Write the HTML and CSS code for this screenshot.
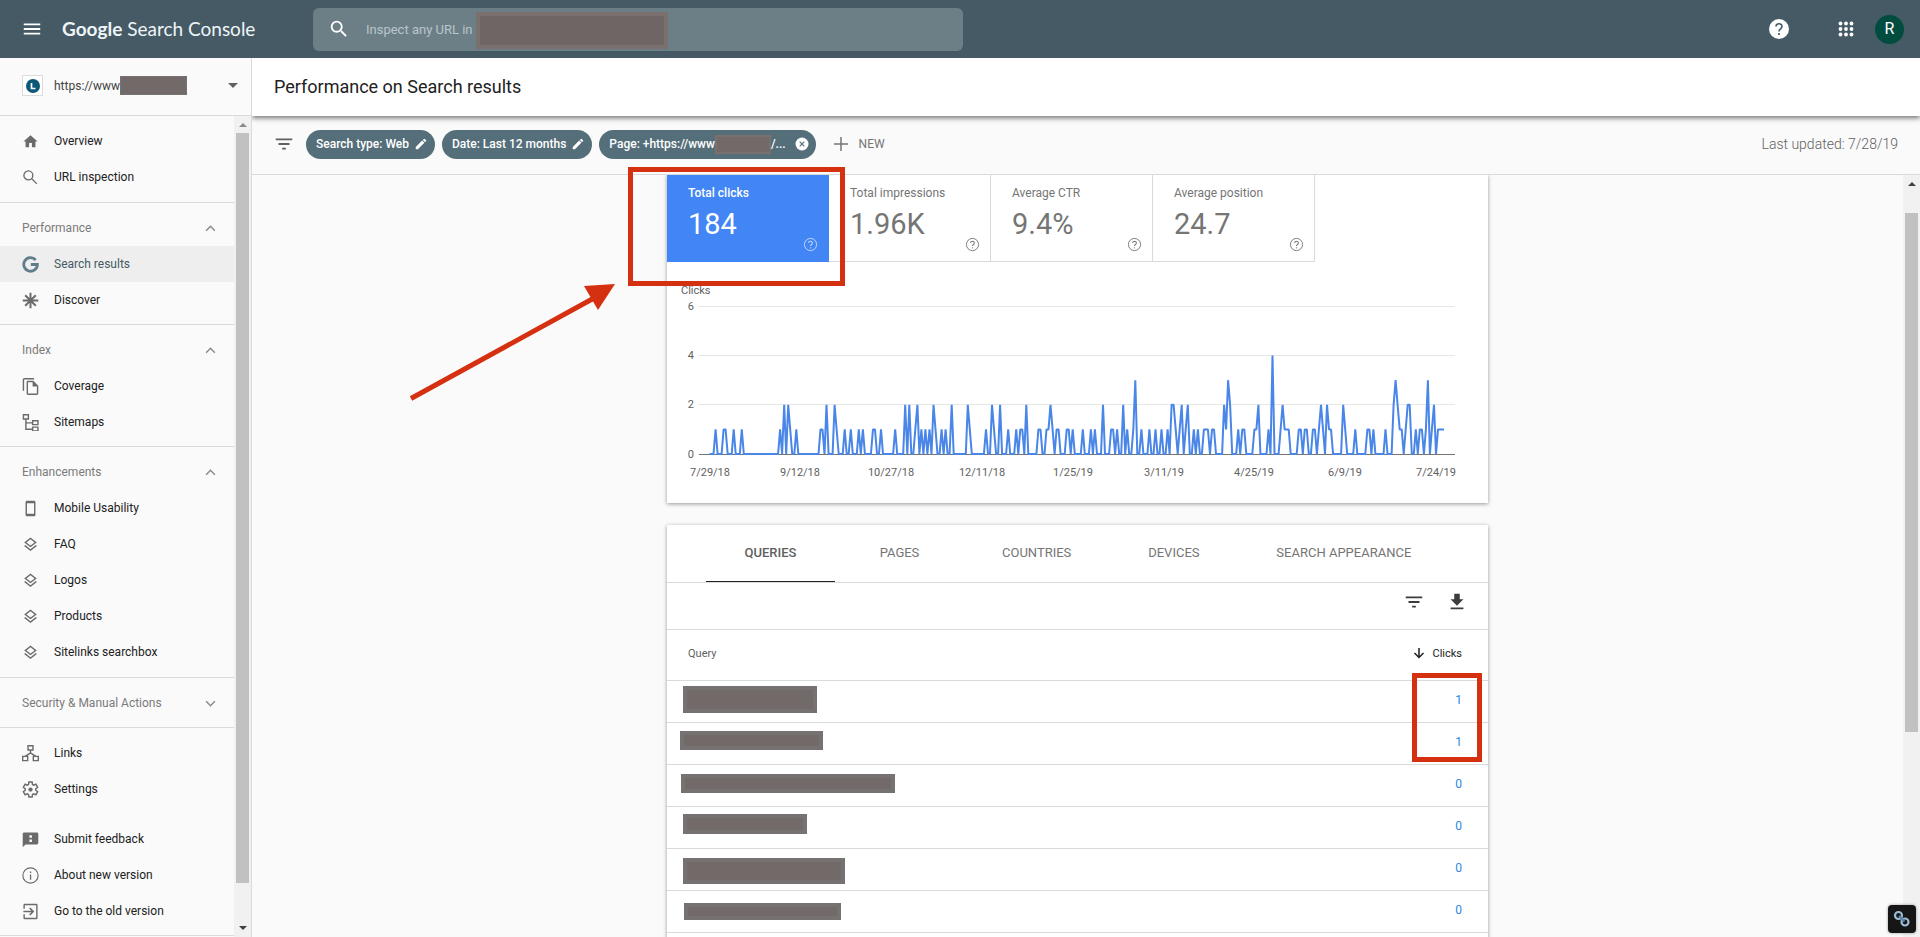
FILE: index.html
```html
<!DOCTYPE html>
<html lang="en">
<head>
<meta charset="utf-8">
<title>Performance on Search results</title>
<link rel="stylesheet" href="styles.css">
</head>
<body>
<svg class="sprite" aria-hidden="true">
  <symbol id="i-search" viewBox="0 0 24 24"><path d="M15.500 14h-.79l-.28-.27A6.470 6.470 0 0 0 16 9.500 6.500 6.500 0 1 0 9.500 16c1.610 0 3.090-.59 4.230-1.570l.27.28v.79l5 4.990L20.490 19l-4.990-5zm-6 0a4.500 4.500 0 1 1 0-9 4.500 4.500 0 0 1 0 9z"/></symbol>
  <symbol id="i-layers" viewBox="0 0 24 24"><path d="M12 18.540l-7.370-5.730L3 14.070l9 7 9-7-1.630-1.270zM12 16l7.360-5.730L21 9l-9-7-9 7 1.630 1.270L12 16zm0-11.470L17.740 9 12 13.470 6.260 9 12 4.530z"/></symbol>
  <symbol id="i-up" viewBox="0 0 12 12"><path d="M2 8l4-4 4 4" fill="none" stroke="currentColor" stroke-width="1.300"/></symbol>
  <symbol id="i-down" viewBox="0 0 12 12"><path d="M2 4l4 4 4-4" fill="none" stroke="currentColor" stroke-width="1.300"/></symbol>
  <symbol id="i-pencil" viewBox="0 0 24 24"><path d="M3 17.250V21h3.750L17.810 9.940l-3.750-3.750L3 17.250zM20.710 7.040a1 1 0 0 0 0-1.410l-2.340-2.340a1 1 0 0 0-1.410 0l-1.830 1.830 3.750 3.750 1.830-1.830z"/></symbol>
  <symbol id="i-filter" viewBox="0 0 24 24"><path d="M10 18h4v-2h-4v2zM3 6v2h18V6H3zm3 7h12v-2H6v2z"/></symbol>
  <symbol id="i-help" viewBox="0 0 16 16"><circle cx="8" cy="8" r="6.500" fill="none" stroke="currentColor"/><path d="M6 6.500C6 5.200 6.900 4.500 8 4.500s2 .8 2 1.900C10 8 8 8 8 9.700" fill="none" stroke="currentColor" stroke-width="1.100"/><circle cx="8" cy="11.500" r=".7"/></symbol>
</svg>

<header class="topbar">
  <button class="icon-btn menu-btn" aria-label="Menu"><svg viewBox="0 0 24 24"><path d="M3 18h18v-2H3v2zm0-5h18v-2H3v2zm0-7v2h18V6H3z"/></svg></button>
  <a class="brand" href="#"><span class="brand-strong">Google</span> Search Console</a>
  <form class="search">
    <svg><use href="#i-search"/></svg>
    <input type="text" aria-label="Inspect any URL" placeholder="Inspect any URL in">
    <span class="mask mask--search"></span>
  </form>
  <div class="topbar-actions">
    <button class="icon-btn help-btn" aria-label="Help"><svg viewBox="0 0 22 22"><circle cx="11" cy="11" r="10"/><path d="M8 8.600C8 6.800 9.300 5.700 11 5.700s3 1.100 3 2.800C14 10.800 11 10.800 11 13.400" fill="none" stroke="#455a64" stroke-width="1.600"/><circle cx="11" cy="16" r="1.100" fill="#455a64"/></svg></button>
    <button class="icon-btn apps-btn" aria-label="Apps"><svg viewBox="0 0 16 16"><g><circle cx="2.500" cy="2.500" r="1.900"/><circle cx="8" cy="2.500" r="1.900"/><circle cx="13.500" cy="2.500" r="1.900"/><circle cx="2.500" cy="8" r="1.900"/><circle cx="8" cy="8" r="1.900"/><circle cx="13.500" cy="8" r="1.900"/><circle cx="2.500" cy="13.500" r="1.900"/><circle cx="8" cy="13.500" r="1.900"/><circle cx="13.500" cy="13.500" r="1.900"/></g></svg></button>
    <button class="avatar">R</button>
  </div>
</header>

<div class="shell">
  <aside class="sidebar">
    <button class="property">
      <span class="favicon"><svg viewBox="0 0 14 14"><circle cx="7" cy="7" r="7" fill="#0d5777"/><path d="M5.500 4v5.500h4" fill="none" stroke="#fff" stroke-width="1.700"/></svg></span>
      <span class="property-name">https://www</span><span class="mask mask--property"></span>
      <span class="caret"></span>
    </button>
    <div class="sidebar-body">
      <nav class="nav">
        <div class="group group--tall">
          <a class="item" href="#"><svg viewBox="0 0 24 24"><path d="M10 20v-6h4v6h5v-8h3L12 3 2 12h3v8z"/></svg>Overview</a>
          <a class="item" href="#"><svg viewBox="0 0 24 24"><g fill="none" stroke="currentColor" stroke-width="1.900"><circle cx="9" cy="9" r="6.300"/><path d="M13.600 13.600l7.400 7.400"/></g></svg>URL inspection</a>
        </div>
        <div class="group">
          <button class="group-title">Performance<svg><use href="#i-up"/></svg></button>
          <a class="item item--active" href="#"><svg viewBox="0 0 24 24"><path d="M19.300 5.600A9.600 9.600 0 1 0 21.700 12H12.500" fill="none" stroke="#607d8b" stroke-width="4"/></svg>Search results</a>
          <a class="item" href="#"><svg viewBox="0 0 24 24"><path d="M12 1v22M1 12h22M4.500 4.500l15 15M19.500 4.500l-15 15" fill="none" stroke="currentColor" stroke-width="2.800"/></svg>Discover</a>
        </div>
        <div class="group">
          <button class="group-title">Index<svg><use href="#i-up"/></svg></button>
          <a class="item" href="#"><svg viewBox="0 0 24 24"><path d="M17 0H3.500a2.500 2.500 0 0 0-2.500 2.500V18h2V2h14V0zM16 4l7 7v11a2 2 0 0 1-2 2H8.500a2 2 0 0 1-2-2V6a2 2 0 0 1 2-2H16zm-1 2H8.500v16H21V12h-6V6z"/></svg>Coverage</a>
          <a class="item" href="#"><svg viewBox="0 0 24 24"><g fill="none" stroke="currentColor" stroke-width="2"><path d="M2 1h7v6H2zM15 9.500h7.500v5.500H15zM15 18.500h7.500V24H15zM5.500 7v14.500H15M5.500 12.500H15"/></g></svg>Sitemaps</a>
        </div>
        <div class="group group--tall">
          <button class="group-title">Enhancements<svg><use href="#i-up"/></svg></button>
          <a class="item" href="#"><svg viewBox="0 0 24 24"><path d="M7 1h10a2 2 0 0 1 2 2v18a2 2 0 0 1-2 2H7a2 2 0 0 1-2-2V3a2 2 0 0 1 2-2zm0 3.500v15h10v-15z"/></svg>Mobile Usability</a>
          <a class="item" href="#"><svg><use href="#i-layers"/></svg>FAQ</a>
          <a class="item" href="#"><svg><use href="#i-layers"/></svg>Logos</a>
          <a class="item" href="#"><svg><use href="#i-layers"/></svg>Products</a>
          <a class="item" href="#"><svg><use href="#i-layers"/></svg>Sitelinks searchbox</a>
        </div>
        <div class="group">
          <button class="group-title">Security &amp; Manual Actions<svg><use href="#i-down"/></svg></button>
        </div>
        <div class="group">
          <a class="item" href="#"><svg viewBox="0 0 24 24"><g fill="none" stroke="currentColor" stroke-width="2"><path d="M8.500 1h7v6h-7zM1 16h7v6H1zM16 16h7v6h-7zM12 7v4.500M4.500 16l7.500-5 7.500 5"/></g></svg>Links</a>
          <a class="item" href="#"><svg viewBox="0 0 24 24"><path d="M19.400 13l.1-1-.1-1 2.700-2-2.500-4.400-3.100 1.300-1.700-1-.5-3.400H9.700l-.5 3.400-1.700 1-3.100-1.300L1.900 9l2.700 2-.1 1 .1 1-2.700 2 2.500 4.400 3.100-1.300 1.700 1 .5 3.400h4.600l.5-3.400 1.700-1 3.100 1.300 2.500-4.400z" fill="none" stroke="currentColor" stroke-width="2"/><circle cx="12" cy="12" r="3"/></svg>Settings</a>
          <div class="subgroup">
            <a class="item" href="#"><svg viewBox="0 0 24 24"><path d="M1 4a2 2 0 0 1 2-2h18a2 2 0 0 1 2 2v13a2 2 0 0 1-2 2H5l-4 4zm9.500 2v3.500h3.500V6zm0 6v3.500h3.500V12z" fill-rule="evenodd"/></svg>Submit feedback</a>
            <a class="item" href="#"><svg viewBox="0 0 24 24"><circle cx="12" cy="12" r="10.800" fill="none" stroke="currentColor" stroke-width="1.600"/><path d="M11.200 10.500h1.800V18h-1.800zM11.200 6.500h1.800v2h-1.800z"/></svg>About new version</a>
            <a class="item" href="#"><svg viewBox="0 0 24 24"><path d="M10.090 16.090l1.600 1.600 5.700-5.700-5.700-5.700-1.600 1.600 3 3H2v2.200h11.100zM20 1H4a2 2 0 0 0-2 2v5h2V3.200h16v17.600H4V16H2v5a2 2 0 0 0 2 2h16a2 2 0 0 0 2-2V3a2 2 0 0 0-2-2z"/></svg>Go to the old version</a>
          </div>
        </div>
      </nav>
      <div class="scrollbar scrollbar--side"><span class="arrow arrow--up arrow--dim"></span><span class="thumb"></span><span class="arrow arrow--down"></span></div>
    </div>
  </aside>

  <main class="main">
    <h1 class="title">Performance on Search results</h1>
    <div class="filters">
      <svg class="filters-icon"><use href="#i-filter"/></svg>
      <button class="chip">Search type: Web<svg><use href="#i-pencil"/></svg></button>
      <button class="chip">Date: Last 12 months<svg><use href="#i-pencil"/></svg></button>
      <button class="chip chip--page"><span>Page: +https://www</span><span class="mask mask--chip"></span><span>/...</span><svg class="chip-close" viewBox="0 0 14 14"><circle cx="7" cy="7" r="6.500"/><path d="M4.700 4.700l4.600 4.600M9.300 4.700L4.700 9.300" stroke="#546e7a" stroke-width="1.200"/></svg></button>
      <button class="new-btn"><svg viewBox="0 0 14 14"><path d="M7 0v14M0 7h14" stroke="currentColor" stroke-width="1.500"/></svg>NEW</button>
      <span class="updated">Last updated: 7/28/19</span>
    </div>

    <div class="viewport">
      <div class="scroller">
        <section class="card card--chart">
          <div class="metrics">
            <button class="metric metric--on"><span class="metric-label">Total clicks</span><span class="metric-value">184</span><svg><use href="#i-help"/></svg></button>
            <button class="metric"><span class="metric-label">Total impressions</span><span class="metric-value">1.96K</span><svg><use href="#i-help"/></svg></button>
            <button class="metric"><span class="metric-label">Average CTR</span><span class="metric-value">9.4%</span><svg><use href="#i-help"/></svg></button>
            <button class="metric"><span class="metric-label">Average position</span><span class="metric-value">24.7</span><svg><use href="#i-help"/></svg></button>
          </div>
          <svg class="chart" viewBox="0 0 821 241" role="img" aria-label="Clicks per day">
            <path class="grid" d="M32 44.500h756M32 93.500h756M32 142.500h756"/>
            <path class="axis" d="M32 192.500h756"/>
            <text x="14" y="32">Clicks</text>
            <g text-anchor="end"><text x="27" y="48">6</text><text x="27" y="97">4</text><text x="27" y="146">2</text><text x="27" y="196">0</text></g>
            <g id="dates" text-anchor="middle"></g>
            <polyline id="line" class="line"/>
          </svg>
        </section>

        <section class="card card--table">
          <div class="tabs" role="tablist">
            <button class="tab tab--on" role="tab" aria-selected="true">QUERIES</button>
            <button class="tab" role="tab">PAGES</button>
            <button class="tab" role="tab">COUNTRIES</button>
            <button class="tab" role="tab">DEVICES</button>
            <button class="tab" role="tab">SEARCH APPEARANCE</button>
          </div>
          <div class="tools">
            <button class="icon-btn" aria-label="Filter rows"><svg><use href="#i-filter"/></svg></button>
            <button class="icon-btn" aria-label="Download"><svg viewBox="0 0 24 24"><path d="M19 9h-4V3H9v6H5l7 7 7-7zM5 18v2h14v-2H5z"/></svg></button>
          </div>
          <table class="table">
            <thead><tr><th>Query</th><th class="num"><svg viewBox="0 0 12 12"><path d="M6 1v9.500M1.500 6L6 10.500 10.500 6" fill="none" stroke="currentColor" stroke-width="1.500"/></svg>Clicks</th></tr></thead>
            <tbody>
              <tr><td><span class="mask mask--row q1"></span></td><td class="num">1</td></tr>
              <tr><td><span class="mask mask--row q2"></span></td><td class="num">1</td></tr>
              <tr><td><span class="mask mask--row q3"></span></td><td class="num">0</td></tr>
              <tr><td><span class="mask mask--row q4"></span></td><td class="num">0</td></tr>
              <tr><td><span class="mask mask--row q5"></span></td><td class="num">0</td></tr>
              <tr><td><span class="mask mask--row q6"></span></td><td class="num">0</td></tr>
              <tr><td></td><td class="num"></td></tr>
            </tbody>
          </table>
        </section>
      </div>
      <div class="scrollbar scrollbar--main"><span class="arrow arrow--up"></span><span class="thumb"></span></div>
      <div class="notes"><div class="notes-inner">
        <span class="box box--total"></span>
        <span class="box box--rows"></span>
        <svg class="pointer" viewBox="0 0 208 120"><path d="M2 115.500L186 14.500" stroke="#d5300f" stroke-width="5"/><path d="M175 3l31-2-17 26z" fill="#d5300f"/></svg>
      </div></div>
    </div>
  </main>
</div>
<button class="floating" aria-label="Link tool"><svg viewBox="0 0 28 28"><g fill="none" stroke="#9dbbd6" stroke-width="2.200"><circle cx="10.500" cy="10.500" r="3.500"/><circle cx="17" cy="17" r="3.500"/></g><path d="M11 11l5.500 5.500" stroke="#5d86ad" stroke-width="2.200"/></svg></button>
<script src="chart.js"></script>
</body>
</html>
```

FILE: styles.css
```css
* { box-sizing: border-box; }
body { margin: 0; height: 100vh; display: flex; flex-direction: column; overflow: hidden; background: #fafafa; color: #212121; font: 12px/16px Roboto, sans-serif; }
button { font: inherit; color: inherit; background: none; border: 0; padding: 0; margin: 0; text-align: left; cursor: pointer; }
a { color: inherit; text-decoration: none; }
svg { fill: currentColor; flex: none; display: block; }
.sprite { position: absolute; width: 0; height: 0; }
.mask { background: #716a69; border: 4px solid #767271; flex: none; }

.topbar { flex: none; height: 58px; display: flex; align-items: center; background: #455a64; color: #fff; padding-right: 16px; }
.menu-btn { margin-left: 21px; }
.icon-btn svg { width: 22px; height: 22px; }
.brand { width: 251px; margin-left: 19px; font: 19px/24px Lato, sans-serif; color: #eef5f8; white-space: nowrap; }
.brand-strong { font-weight: 700; }
.search { position: relative; flex: 0 1 650px; height: 43px; display: flex; align-items: center; gap: 16px; padding-left: 15px; background: #6c7f87; border-radius: 6px; }
.search svg { width: 22px; height: 22px; }
.search input { flex: 1; height: 100%; padding: 0; border: 0; outline: 0; background: none; color: #fff; font: 13px/20px Roboto, sans-serif; }
.search input::placeholder { color: #b9c5ca; opacity: 1; }
.mask--search { position: absolute; left: 163px; top: 4px; width: 192px; height: 37px; background: #6e6665; border-color: #7a706e; }
.topbar-actions { margin-left: auto; display: flex; align-items: center; }
.apps-btn { margin: 0 21px 0 48px; }
.apps-btn svg { width: 16px; height: 16px; }
.avatar { width: 29px; height: 29px; border-radius: 50%; background: #004d40; text-align: center; font-size: 16px; }

.shell { flex: 1; min-height: 0; display: flex; }
.sidebar { flex: none; width: 252px; display: flex; flex-direction: column; border-right: 1px solid #dadada; }
.property { flex: none; height: 58px; display: flex; align-items: center; padding: 0 13px 2px 22px; border-bottom: 1px solid #dadada; color: #424242; }
.favicon { width: 21px; height: 21px; display: grid; place-items: center; background: #fff; border: 1px solid #dcdcdc; margin-right: 11px; }
.favicon svg { width: 14px; height: 14px; }
.mask--property { width: 67px; height: 19px; border-width: 1px; }
.caret { margin-left: auto; border: 5px solid transparent; border-top-color: #616161; border-bottom: 0; }
.sidebar-body { flex: 1; min-height: 0; display: flex; }
.nav { flex: 1; overflow: hidden; }
.group { padding: 7px 0 6px; border-bottom: 1px solid #dadada; }
.group--tall { padding-bottom: 7px; }
.subgroup { padding-top: 14px; }
.item { height: 36px; display: flex; align-items: center; gap: 14px; padding-left: 22px; }
.item svg { width: 17px; height: 17px; margin-right: 1px; color: #6b6b6b; }
.item--active { background: #eeeeee; color: #455a64; }
.group-title { width: 100%; height: 36px; display: flex; align-items: center; justify-content: space-between; padding: 0 17px 0 22px; color: #7b7b7b; }
.group-title svg { width: 13px; height: 13px; color: #888; }

.scrollbar { flex: none; width: 17px; background: #f1f1f1; display: flex; flex-direction: column; align-items: center; }
.thumb { width: 13px; background: #c1c1c1; }
.scrollbar--side { padding: 7px 0; justify-content: space-between; }
.scrollbar--side .thumb { flex: 1; margin: 6px 0 43px; }
.scrollbar--main { padding-top: 7px; }
.scrollbar--main .thumb { height: 519px; margin-top: 27px; }
.arrow { border: 4px solid transparent; }
.arrow--up { border-bottom-color: #404040; border-top: 0; }
.arrow--down { border-top-color: #404040; border-bottom: 0; }
.arrow--dim { border-bottom-color: #8a8a8a; }

.main { flex: 1; min-width: 0; display: flex; flex-direction: column; }
.title { position: relative; flex: none; margin: 0; height: 58px; padding: 0 22px; background: #fff; box-shadow: 0 2px 5px rgba(0, 0, 0, .55); font-size: 18px; font-weight: 400; line-height: 58px; clip-path: inset(0 0 -10px 0); }
.filters { flex: none; height: 59px; display: flex; align-items: center; padding: 0 22px 2px 21px; border-bottom: 1px solid #dadada; color: #616161; }
.filters-icon { width: 22px; height: 22px; margin-right: 11px; }
.chip { height: 29px; display: flex; align-items: center; margin-right: 7px; padding: 0 7px 0 10px; border-radius: 15px; background: #546e7a; color: #fff; font-weight: 500; }
.chip svg { width: 14px; height: 14px; margin-left: 5px; }
.mask--chip { width: 56px; height: 19px; border-width: 2px; border-color: #7a706e; }
.chip .chip-close { margin-left: 9px; }
.new-btn { display: flex; align-items: center; gap: 11px; margin-left: 11px; color: #757575; }
.new-btn svg { width: 14px; height: 14px; }
.updated { margin-left: auto; font-size: 14px; font-weight: 300; }

.viewport { position: relative; flex: 1; min-height: 0; display: flex; }
.scroller { flex: 1; overflow: hidden; display: flex; flex-direction: column; align-items: center; gap: 22px; }
.card { flex: none; width: 100%; max-width: 821px; background: #fff; box-shadow: 0 1px 4px rgba(0, 0, 0, .4); }
.metrics { display: flex; }
.metric { position: relative; flex: 0 1 162px; height: 87px; display: flex; flex-direction: column; gap: 7px; padding: 10px 0 0 21px; border: solid #dadada; border-width: 0 1px 1px 0; color: #757575; }
.metric-value { font-size: 29px; line-height: 32px; }
.metric svg { position: absolute; right: 10px; bottom: 9px; width: 15px; height: 15px; }
.metric--on { background: #4285f4; border-color: #4285f4; color: #fff; }
.metric--on .metric-label { font-weight: 500; }
.metric--on svg { color: #c6dafc; }
.chart { width: 100%; height: auto; }
.chart text { font: 11px Roboto, sans-serif; fill: #616161; }
.grid { stroke: #e6e6e6; }
.axis { stroke: #757575; }
.line { fill: none; stroke: #4a86e8; stroke-width: 2; stroke-linejoin: bevel; }

.tabs { height: 58px; display: flex; padding-left: 39px; border-bottom: 1px solid #dadada; }
.tab { min-width: 129px; padding: 0 38px; text-align: center; font-size: 13px; color: #757575; border-bottom: 1px solid transparent; }
.tab--on { font-weight: 500; color: #5f5f5f; border-color: #212121; }
.tools { height: 47px; display: flex; justify-content: flex-end; align-items: flex-start; gap: 21px; padding: 8px 20px 0; border-bottom: 1px solid #dadada; color: #3c3c3c; }
.table { width: 100%; border-collapse: collapse; }
.table th { height: 50px; padding: 0 0 2px 21px; border-bottom: 1px solid #dadada; text-align: left; font-size: 11px; font-weight: 400; color: #616161; }
.table td { position: relative; height: 42px; padding: 0; border-bottom: 1px solid #dadada; }
.table .num { padding: 0 26px 2px 0; text-align: right; }
.table th.num { color: #212121; }
.table td.num { color: #2b87dd; }
.num svg { display: inline-block; width: 12px; height: 12px; margin-right: 7px; vertical-align: -2px; }
.mask--row { position: absolute; }
.q1 { left: 16px; top: 5px; width: 134px; height: 27px; }
.q2 { left: 13px; top: 8px; width: 143px; height: 19px; }
.q3 { left: 14px; top: 9px; width: 214px; height: 19px; }
.q4 { left: 16px; top: 7px; width: 124px; height: 20px; }
.q5 { left: 16px; top: 9px; width: 162px; height: 26px; }
.q6 { left: 17px; top: 12px; width: 157px; height: 17px; }

.notes { position: absolute; inset: 0 17px auto 0; display: flex; justify-content: center; pointer-events: none; }
.notes-inner { position: relative; flex: 0 1 821px; }
.box { position: absolute; border: 5px solid #d5300f; }
.box--total { left: -39px; top: -8px; width: 217px; height: 119px; }
.box--rows { right: 6px; top: 498px; width: 70px; height: 89px; }
.pointer { position: absolute; left: -258px; top: 108px; width: 208px; height: 120px; }
.floating { position: fixed; right: 4px; bottom: 4px; width: 28px; height: 28px; border-radius: 4px; background: #161616; box-shadow: 0 0 3px rgba(0, 0, 0, .4); }
```

FILE: chart.js
```javascript
// Day index : clicks, for every day that had clicks.
const clicks = `3:1 7:1 8:1 12:1 16:1 35:1 37:2 39:2 40:1 43:1 55:1 56:1 58:2 62:2 63:1 67:1 70:1 74:1 76:1
81:1 82:1 85:1 92:1 97:2 99:2 102:1 103:2 105:1 107:1 109:1 111:2 112:1 115:1 117:1 120:2 128:2 129:1 137:1
140:2 141:1 144:2 148:1 152:1 154:1 155:1 157:2 163:1 164:1 167:1 168:1 169:2 170:1 172:1 173:1 177:1 178:1
180:1 185:1 189:1 191:1 195:2 199:1 200:1 202:1 205:2 207:1 210:1 211:3 214:1 218:1 221:1 224:1 227:1 229:2
230:2 231:1 233:1 234:2 236:1 237:2 240:1 242:1 245:1 246:1 247:1 249:1 250:1 255:2 256:1 257:3 258:2 262:1
264:1 265:1 270:1 271:1 272:2 277:1 279:4 283:1 284:2 285:1 286:1 287:1 292:1 293:1 295:1 296:1 299:1 300:1
302:1 303:2 304:1 306:2 307:1 308:1 314:2 315:1 320:1 326:1 327:1 329:1 335:1 339:2 340:3 341:2 342:1 343:1
345:1 346:2 347:2 350:1 352:1 353:1 355:1 356:3 358:1 359:2 361:1 362:1 363:1 364:1`;
const days = new Array(365).fill(0);
clicks.split(/\s+/).forEach(pair => {
  const [day, count] = pair.split(":").map(Number);
  days[day] = count;
});
const x = day => 42.5 + day * 2.018;
document.getElementById("line").setAttribute("points",
  days.map((count, day) => x(day).toFixed(1) + "," + (192 - count * 24.6).toFixed(1)).join(" "));

const labels = ["7/29/18", "9/12/18", "10/27/18", "12/11/18", "1/25/19", "3/11/19", "4/25/19", "6/9/19", "7/24/19"];
labels.forEach((label, i) => {
  const text = document.createElementNS("http://www.w3.org/2000/svg", "text");
  text.setAttribute("x", Math.round(x(i * 45)));
  text.setAttribute("y", 214);
  text.textContent = label;
  document.getElementById("dates").append(text);
});
```
